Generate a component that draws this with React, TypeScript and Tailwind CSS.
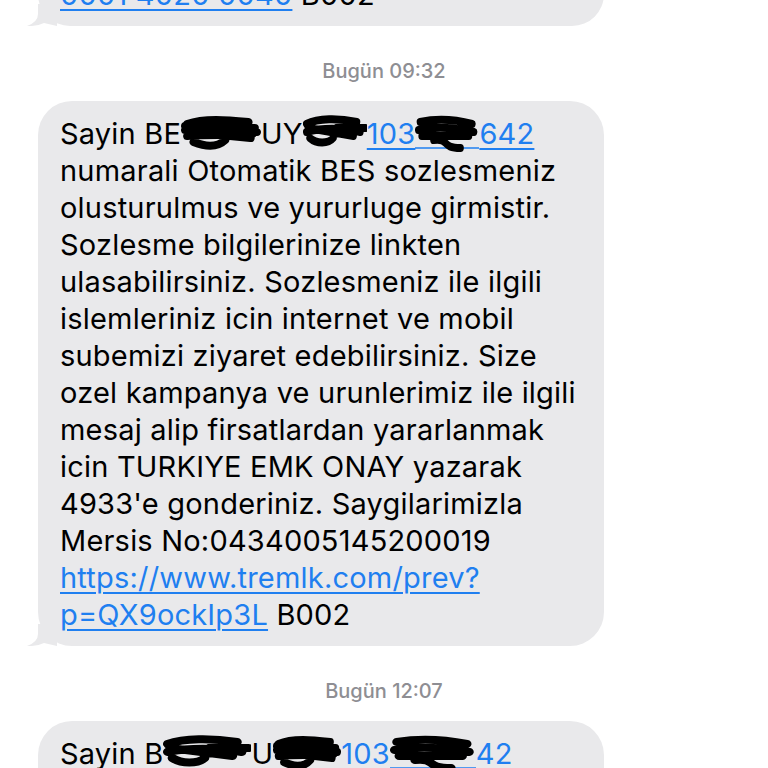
import React from 'react';

const font = { fontFamily: 'Inter, "Noto Sans", sans-serif' };

// black marker scribble used to hide names/numbers
const Scribble = ({ w, variant = 0, under = false }: { w: number; variant?: number; under?: boolean }) => {
  const paths = [
    'M6 16 C22 10 44 12 64 14 M4 22 C26 18 50 20 70 20 M6 28 C22 26 46 28 68 26 M12 34 C26 40 36 38 42 32 M4 18 L72 24 M8 24 L66 30',
    'M4 16 C18 10 42 10 64 14 M4 24 C22 20 46 20 68 24 M8 30 C16 36 30 36 36 30 M40 20 L74 20 M6 20 L60 28',
    'M6 14 C28 10 50 12 68 16 M4 22 C26 18 52 20 70 24 M8 28 L64 28 M22 32 C42 30 30 40 54 40',
  ];
  return (
    <span className="relative inline-block align-baseline" style={{ width: w, height: 20 }}>
      <svg
        className="absolute left-0 top-[-16px]"
        width={w}
        height={44}
        viewBox="0 0 76 44"
        preserveAspectRatio="none"
      >
        {under && <line x1="0" y1="40" x2="76" y2="40" stroke="#1f7ff0" strokeWidth={1.5} />}
        <path d={paths[variant % 3]} stroke="#000" strokeWidth={8} strokeLinecap="round" fill="none" />
      </svg>
    </span>
  );
};

const Link = ({ children }: { children: React.ReactNode }) => (
  <span className="text-[#1f7ff0] underline decoration-[1.5px] underline-offset-[4px]">{children}</span>
);

const Bubble = ({ children, className = '' }: { children: React.ReactNode; className?: string }) => (
  <div className={`relative ml-[38px] w-[566px] rounded-[34px] bg-[#e9e9eb] pl-[22px] pr-[16px] pt-[14px] pb-[13px] ${className}`}>
    <div className="text-[29px] leading-[37px] text-black tracking-[0.2px]" style={font}>
      {children}
    </div>
    <svg className="absolute left-[-11px] bottom-0" width="30" height="22" viewBox="0 0 30 22">
      <path d="M11 0 L11 10 Q11 18 0 22 Q10 22.5 17 19 L30 22 L30 0 Z" fill="#e9e9eb" />
    </svg>
  </div>
);

const Stamp = ({ children }: { children: React.ReactNode }) => (
  <div className="mt-[34px] mb-[18px] text-center text-[20px] leading-[23px] font-medium text-[#8e8e93]" style={font}>
    {children}
  </div>
);

export default function App() {
  return (
    <div className="h-[768px] w-[768px] overflow-hidden bg-white">
      <Bubble className="mt-[-38px]">
        <div>
          <Link>0001 4020 0040</Link> B002
        </div>
      </Bubble>

      <Stamp>Bugün 09:32</Stamp>

      <Bubble>
        <div className="whitespace-nowrap">
          Sayin BE<Scribble w={80} variant={0} />UY<Scribble w={64} variant={1} />
          <Link>
            103<Scribble w={64} variant={2} under />642
          </Link>
        </div>
        <div>numarali Otomatik BES sozlesmeniz</div>
        <div>olusturulmus ve yururluge girmistir.</div>
        <div>Sozlesme bilgilerinize linkten</div>
        <div>ulasabilirsiniz. Sozlesmeniz ile ilgili</div>
        <div>islemleriniz icin internet ve mobil</div>
        <div>subemizi ziyaret edebilirsiniz. Size</div>
        <div>ozel kampanya ve urunlerimiz ile ilgili</div>
        <div>mesaj alip firsatlardan yararlanmak</div>
        <div>icin TURKIYE EMK ONAY yazarak</div>
        <div>4933'e gonderiniz. Saygilarimizla</div>
        <div>Mersis No:0434005145200019</div>
        <div>
          <Link>https://www.tremlk.com/prev?</Link>
        </div>
        <div>
          <Link>p=QX9ockIp3L</Link> B002
        </div>
      </Bubble>

      <Stamp>Bugün 12:07</Stamp>

      <Bubble>
        <div className="whitespace-nowrap">
          Sayin B<Scribble w={88} variant={1} />U<Scribble w={68} variant={0} />
          <Link>
            103<Scribble w={86} variant={2} under />42
          </Link>
        </div>
        <div>numarali Otomatik BES sozlesmeniz</div>
      </Bubble>
    </div>
  );
}
